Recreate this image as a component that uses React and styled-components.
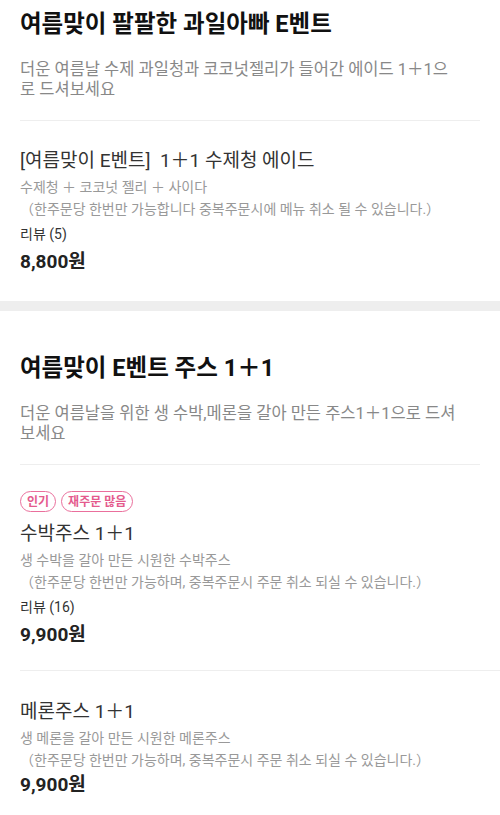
import React from "react";
import styled, { createGlobalStyle } from "styled-components";

const Global = createGlobalStyle`
  html, body { margin: 0; padding: 0; background: #fff; }
  body { font-family: Roboto, "Noto Sans CJK KR", sans-serif; -webkit-font-smoothing: antialiased; }
  * { box-sizing: border-box; }
`;

const Page = styled.div`
  width: 500px;
  background: #fff;
`;

const Section = styled.section`
  padding-top: ${(p) => p.$top}px;
`;

const Band = styled.div`
  height: 10px;
  background: #eeeeee;
`;

const Header = styled.header`
  margin: 0 20px;
  padding-bottom: 20px;
  border-bottom: 1px solid #eeeeee;
`;

const Title = styled.h2`
  margin: 0;
  font-size: 23.5px;
  line-height: 32px;
  font-weight: 700;
  color: #111;
`;

const Desc = styled.p`
  margin: 20px 0 0;
  padding-right: 19px;
  font-size: 16.5px;
  line-height: 20px;
  color: #888;
`;

const List = styled.div`
  padding-left: 20px;
`;

const Item = styled.div`
  padding: 26px 20px 25px 0;
  &:not(:last-child) {
    padding-bottom: 21px;
  }
  & + & {
    border-top: 1px solid #eeeeee;
    padding-top: 27px;
  }
`;

const Badges = styled.div`
  display: flex;
  gap: 5px;
  margin-bottom: 8px;
`;

const Badge = styled.span`
  display: inline-flex;
  align-items: center;
  height: 21px;
  padding: 0 6px;
  border: 1.5px solid #ea6f9c;
  border-radius: 11px;
  color: #e45a8d;
  font-size: 12px;
  font-weight: 700;
  line-height: 1;
`;

const Name = styled.div`
  margin-bottom: 2px;
  font-size: 19px;
  line-height: 28px;
  color: #333;
  white-space: pre;
`;

const Sub = styled.div`
  font-size: 14px;
  line-height: 21.5px;
  color: #999;
  white-space: nowrap;
`;

const Review = styled.div`
  margin-top: 3px;
  font-size: 14px;
  line-height: 22px;
  color: #333;
`;

const Price = styled.div`
  margin-top: ${(p) => p.$mt}px;
  font-size: 19px;
  line-height: 28px;
  font-weight: 700;
  color: #222;
`;

const sections = [
  {
    top: 8,
    title: "여름맞이 팔팔한 과일아빠 E벤트",
    desc: "더운 여름날 수제 과일청과 코코넛젤리가 들어간 에이드 1＋1으로 드셔보세요",
    items: [
      {
        name: "[여름맞이 E벤트]  1＋1 수제청 에이드",
        sub: "수제청 ＋ 코코넛 젤리 ＋ 사이다",
        note: "（한주문당 한번만 가능합니다 중복주문시에 메뉴 취소 될 수 있습니다.）",
        review: "리뷰 (5)",
        price: "8,800원",
      },
    ],
  },
  {
    top: 41,
    title: "여름맞이 E벤트 주스 1＋1",
    desc: "더운 여름날을 위한 생 수박,메론을 갈아 만든 주스1＋1으로 드셔보세요",
    items: [
      {
        badges: ["인기", "재주문 많음"],
        name: "수박주스 1＋1",
        sub: "생 수박을 갈아 만든 시원한 수박주스",
        note: "（한주문당 한번만 가능하며, 중복주문시 주문 취소 되실 수 있습니다.）",
        review: "리뷰 (16)",
        price: "9,900원",
      },
      {
        name: "메론주스 1＋1",
        sub: "생 메론을 갈아 만든 시원한 메론주스",
        note: "（한주문당 한번만 가능하며, 중복주문시 주문 취소 되실 수 있습니다.）",
        price: "9,900원",
      },
    ],
  },
];

export default function App() {
  return (
    <Page>
      <Global />
      {sections.map((s, i) => (
        <React.Fragment key={i}>
          {i > 0 && <Band />}
          <Section $top={s.top}>
            <Header>
              <Title>{s.title}</Title>
              <Desc>{s.desc}</Desc>
            </Header>
            <List>
              {s.items.map((it, j) => (
                <Item key={j}>
                  {it.badges && (
                    <Badges>
                      {it.badges.map((b) => (
                        <Badge key={b}>{b}</Badge>
                      ))}
                    </Badges>
                  )}
                  <Name>{it.name}</Name>
                  <Sub>{it.sub}</Sub>
                  <Sub>{it.note}</Sub>
                  {it.review && <Review>{it.review}</Review>}
                  <Price $mt={it.review ? 3 : 0}>{it.price}</Price>
                </Item>
              ))}
            </List>
          </Section>
        </React.Fragment>
      ))}
    </Page>
  );
}
